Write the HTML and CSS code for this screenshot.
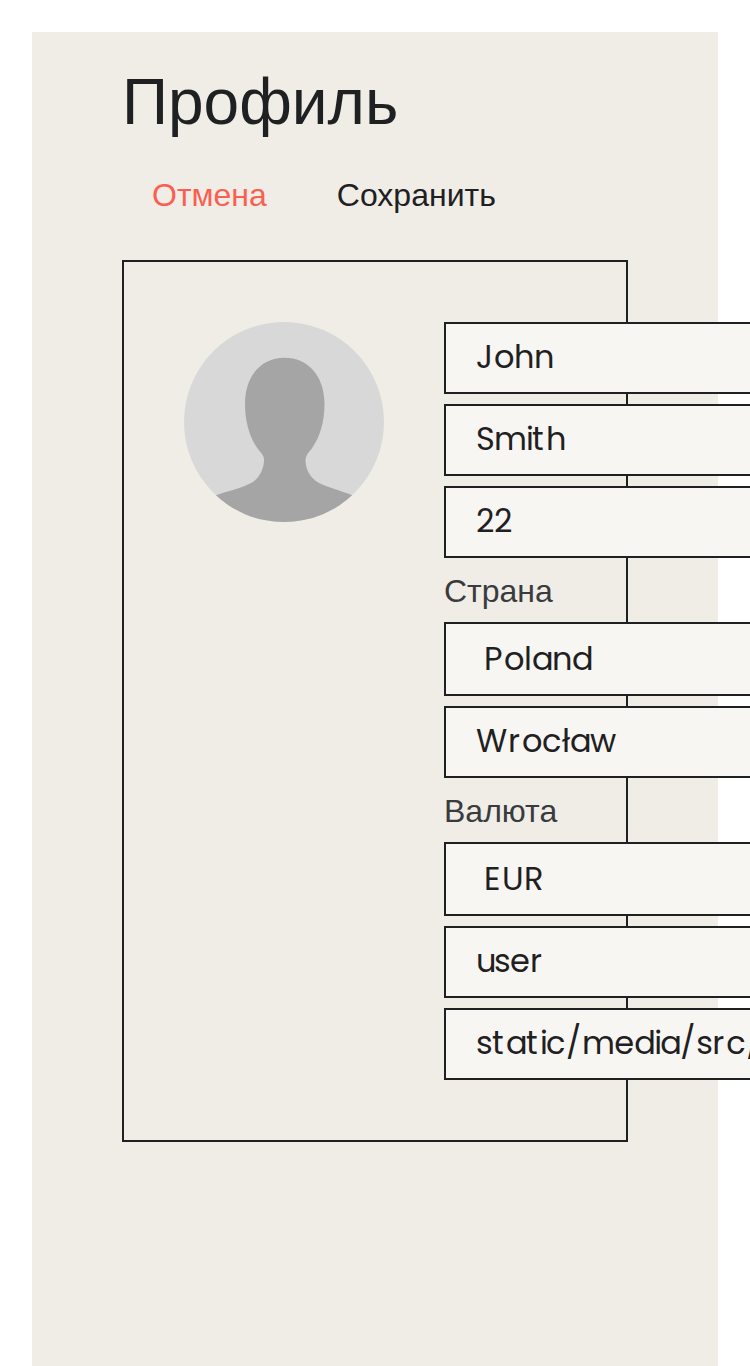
FILE: index.html
```html
<!DOCTYPE html>
<html lang="ru">
<head>
<meta charset="utf-8">
<title>Профиль</title>
<link rel="stylesheet" href="styles.css">
</head>
<body>
<main class="page">
  <h1 class="title">Профиль</h1>
  <div class="actions">
    <button class="action action-cancel" type="button">Отмена</button>
    <button class="action" type="button">Сохранить</button>
  </div>
  <section class="card">
    <svg class="avatar" viewBox="0 0 200 200" aria-hidden="true">
      <defs><clipPath id="round"><circle cx="100" cy="100" r="100"/></clipPath></defs>
      <g clip-path="url(#round)">
        <rect width="200" height="200" fill="#d8d8d8"/>
        <path fill="#a5a5a5" d="M100.500 35.800C77 35.800 61 54 61 82C61 98 65 115 74 127C78 132 80 134 80 138C80 147 75 157 67 161C58 166 44 169 31 173.500L0 200H200L169 173.500C157 169 143 165 135 161C126 156 121.500 147 121.500 138C121.500 134 124 131 127.500 127C136 115 140.500 100 140.500 82C140.500 54 124 35.800 100.500 35.800Z"/>
      </g>
    </svg>
    <div class="fields">
      <div class="field"><span class="value">John</span></div>
      <div class="field"><span class="value">Smith</span></div>
      <div class="field"><span class="value">22</span></div>
      <div class="label">Страна</div>
      <div class="field select"><span class="value">Poland</span></div>
      <div class="field"><span class="value">Wrocław</span></div>
      <div class="label">Валюта</div>
      <div class="field select"><span class="value">EUR</span></div>
      <div class="field"><span class="value">user</span></div>
      <div class="field"><span class="value">static/media/src/</span></div>
    </div>
  </section>
</main>
<script src="spacing.js"></script>
</body>
</html>
```
FILE: styles.css
```css
* { box-sizing: border-box; }

html { overflow: hidden; }

body {
  height: 1366px;
  margin: 0;
  padding: 32px 32px 0;
  background: #fff;
  color: #1f2022;
  font-family: "Liberation Sans", Arial, sans-serif;
  font-size: 32px;
  overflow: hidden;
}

.page {
  height: 1334px;
  padding: 30px 90px 0;
  background: #efede6;
}

.title {
  margin: 0;
  font-size: 64px;
  font-weight: 400;
  line-height: 80px;
}

.actions {
  display: flex;
  gap: 10px;
  padding-top: 18px;
  margin-bottom: 30px;
}

.action {
  height: 70px;
  padding: 0 30px;
  border: 0;
  background: none;
  color: inherit;
  font: inherit;
}

.action-cancel { color: #fa5f51; }

.card {
  display: flex;
  align-items: flex-start;
  gap: 60px;
  padding: 60px;
  border: 2px solid #1f2022;
}

.avatar {
  flex: none;
  width: 200px;
  height: 200px;
}

.fields {
  display: flex;
  flex: none;
  flex-direction: column;
  gap: 10px;
  width: 500px;
}

.label {
  height: 44px;
  color: #393b3d;
  line-height: 46px;
}

.field {
  display: flex;
  align-items: center;
  height: 72px;
  padding: 0 30px 2px;
  border: 2px solid #1f2022;
  background: #f7f6f2;
  white-space: nowrap;
}

.value {
  font-family: Poppins, Inter, sans-serif;
  font-kerning: none;
  line-height: 48px;
}

.select {
  height: 74px;
  padding: 0 38px;
}
```
FILE: spacing.js
```javascript
// Whole-pixel letter advances for the 32px field values.
const ADVANCES = {
  J: 18, S: 18, P: 20, W: 32, E: 18, U: 22, R: 20, 2: 18,
  a: 20, c: 20, d: 20, e: 20, h: 20, i: 6, l: 8, "ł": 8, m: 32,
  n: 20, o: 20, r: 14, s: 16, t: 14, u: 18, w: 26, "/": 16,
};

const pen = document.createElement("canvas").getContext("2d");
pen.font = "320px Poppins, Inter, sans-serif";

for (const value of document.querySelectorAll(".value")) {
  const letters = [...value.textContent];
  value.textContent = "";
  for (const letter of letters) {
    const natural = pen.measureText(letter).width / 10;
    const span = document.createElement("span");
    span.textContent = letter;
    span.style.letterSpacing = `${ADVANCES[letter] - natural}px`;
    value.append(span);
  }
}
```
